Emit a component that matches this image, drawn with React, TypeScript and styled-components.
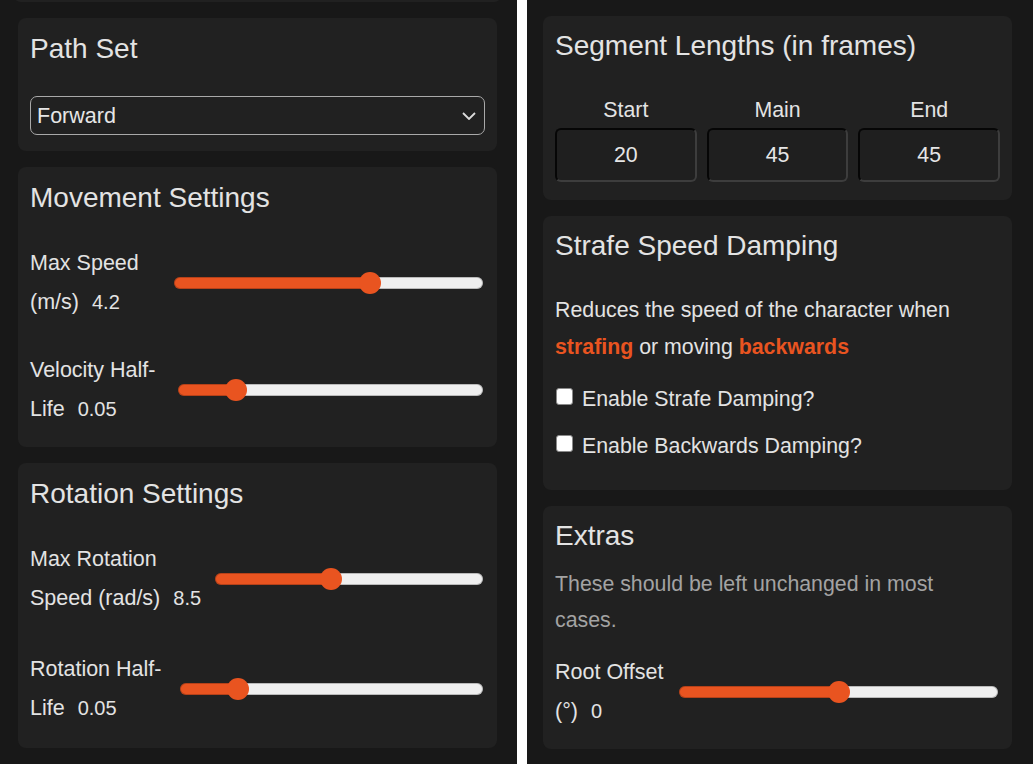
import React, { useState } from "react";
import styled, { createGlobalStyle } from "styled-components";

const ORANGE = "#e95420";

const GlobalStyle = createGlobalStyle`
  html, body {
    margin: 0;
    padding: 0;
    background: #ffffff;
  }
  body {
    font-family: "Liberation Sans", Arial, sans-serif;
    color: #e3e3e3;
    overflow: hidden;
  }
`;

const Page = styled.div`
  display: grid;
  grid-template-columns: 517px 1fr;
  column-gap: 10px;
  height: 764px;
  background: #ffffff;
`;

const Column = styled.div<{ $left: number; $right: number }>`
  background: #181818;
  display: flex;
  flex-direction: column;
  gap: 16px;
  padding: 0 ${(p) => p.$right}px 0 ${(p) => p.$left}px;
  overflow: hidden;
`;

// bottom edge of the panel scrolled out above the viewport
const Tail = styled.div<{ $bleed: number; $show: number }>`
  height: 20px;
  margin: ${(p) => p.$show - 20}px -${(p) => p.$bleed}px 0;
  background: #212121;
  border-radius: 8px;
  flex: none;
`;

const Panel = styled.section<{ $padTop: number; $padBottom: number }>`
  background: #212121;
  border-radius: 8px;
  padding: ${(p) => p.$padTop}px 12px ${(p) => p.$padBottom}px;
  flex: none;
`;

const Title = styled.h2`
  margin: 0;
  font-size: 28px;
  line-height: 36px;
  font-weight: 400;
  color: #e3e3e3;
`;

const SelectWrap = styled.div`
  position: relative;
  margin-top: 29px;
`;

const Select = styled.select`
  appearance: none;
  -webkit-appearance: none;
  display: block;
  width: 100%;
  height: 39px;
  box-sizing: border-box;
  padding: 0 30px 0 6px;
  background: transparent;
  color: #e6e6e6;
  border: 1px solid #a9a9a9;
  border-radius: 7px;
  font-family: inherit;
  font-size: 21.5px;
  outline: none;
`;

const Chevron = styled.svg`
  position: absolute;
  right: 9px;
  top: 50%;
  transform: translateY(-50%);
  pointer-events: none;
`;

const SliderList = styled.div<{ $top: number; $gap: number }>`
  display: flex;
  flex-direction: column;
  gap: ${(p) => p.$gap}px;
  margin-top: ${(p) => p.$top}px;
`;

const SliderRow = styled.div`
  display: flex;
  align-items: center;
`;

const SliderLabel = styled.label<{ $width: number }>`
  flex: none;
  width: ${(p) => p.$width}px;
  font-size: 21.5px;
  line-height: 39px;
  color: #e3e3e3;
`;

const SliderValue = styled.span`
  margin-left: 13px;
  font-size: 20px;
`;

const Range = styled.input.attrs({ type: "range" })<{ $pct: number }>`
  -webkit-appearance: none;
  appearance: none;
  flex: 1;
  min-width: 0;
  height: 12px;
  margin: 0 2px;
  border-radius: 6px;
  outline: none;
  box-shadow: inset 0 0 0 1px rgba(0, 0, 0, 0.22);
  background: linear-gradient(
    to right,
    ${ORANGE} 0,
    ${ORANGE} calc(11px + (100% - 22px) * ${(p) => p.$pct}),
    #efefef calc(11px + (100% - 22px) * ${(p) => p.$pct}),
    #efefef 100%
  );
  &::-webkit-slider-thumb {
    -webkit-appearance: none;
    appearance: none;
    width: 22px;
    height: 22px;
    border-radius: 50%;
    border: none;
    background: ${ORANGE};
  }
`;

const SegmentGrid = styled.div`
  display: grid;
  grid-template-columns: repeat(3, 1fr);
  column-gap: 10px;
  margin-top: 34px;
`;

const SegmentCell = styled.div`
  display: flex;
  flex-direction: column;
  align-items: center;
  gap: 6px;
`;

const SegmentLabel = styled.span`
  font-size: 21.33px;
  line-height: 24px;
`;

const SegmentInput = styled.input`
  width: 100%;
  height: 54px;
  box-sizing: border-box;
  border: 2px solid;
  border-color: #060606 #3d3d3d #3d3d3d #060606;
  border-radius: 6px;
  background: #1f1f1f;
  color: #e6e6e6;
  font-family: inherit;
  font-size: 21.33px;
  text-align: center;
  outline: none;
`;

const Description = styled.p<{ $top: number; $muted?: boolean; $lh: number }>`
  margin: ${(p) => p.$top}px 0 0;
  font-size: 21.33px;
  line-height: ${(p) => p.$lh}px;
  color: ${(p) => (p.$muted ? "#a3a3a3" : "#e3e3e3")};
`;

const Accent = styled.strong`
  color: ${ORANGE};
  font-weight: 700;
`;

const CheckList = styled.div`
  display: flex;
  flex-direction: column;
  gap: 10px;
  margin-top: 15px;
`;

const CheckRow = styled.label`
  display: flex;
  align-items: center;
  font-size: 21.33px;
  line-height: 37px;
  color: #e3e3e3;
`;

const Checkbox = styled.input.attrs({ type: "checkbox" })`
  appearance: none;
  -webkit-appearance: none;
  width: 17px;
  height: 17px;
  margin: 0 9px 6px 1px;
  box-sizing: border-box;
  border: 1px solid #8a8a8a;
  border-radius: 3px;
  background: #ffffff;
  flex: none;
`;

type SliderSpec = {
  label: string;
  min: number;
  max: number;
  step: number;
  value: number;
  labelWidth: number;
};

const Slider: React.FC<SliderSpec> = ({ label, min, max, step, value, labelWidth }) => {
  const [v, setV] = useState(value);
  const pct = (v - min) / (max - min);
  return (
    <SliderRow>
      <SliderLabel $width={labelWidth}>
        {label}
        <SliderValue>{v}</SliderValue>
      </SliderLabel>
      <Range
        $pct={pct}
        min={min}
        max={max}
        step={step}
        value={v}
        onChange={(e) => setV(Number(e.target.value))}
      />
    </SliderRow>
  );
};

export default function App() {
  return (
    <>
      <GlobalStyle />
      <Page>
        <Column $left={18} $right={20}>
          <Tail $bleed={5} $show={2} />

          <Panel $padTop={13} $padBottom={16}>
            <Title>Path Set</Title>
            <SelectWrap>
              <Select defaultValue="forward">
                <option value="forward">Forward</option>
                <option value="strafe">Strafe</option>
                <option value="backward">Backward</option>
              </Select>
              <Chevron width="14" height="8" viewBox="0 0 14 8">
                <polyline points="1,1 7,7 13,1" fill="none" stroke="#dcdcdc" strokeWidth="1.8" />
              </Chevron>
            </SelectWrap>
          </Panel>

          <Panel $padTop={13} $padBottom={18}>
            <Title>Movement Settings</Title>
            <SliderList $top={28} $gap={29}>
              <Slider label="Max Speed (m/s)" min={0} max={6.5} step={0.1} value={4.2} labelWidth={142} />
              <Slider label="Velocity Half-Life" min={0} max={0.3} step={0.01} value={0.05} labelWidth={146} />
            </SliderList>
          </Panel>

          <Panel $padTop={13} $padBottom={20}>
            <Title>Rotation Settings</Title>
            <SliderList $top={28} $gap={32}>
              <Slider label="Max Rotation Speed (rad/s)" min={0} max={20} step={0.1} value={8.5} labelWidth={183} />
              <Slider label="Rotation Half-Life" min={0} max={0.3} step={0.01} value={0.05} labelWidth={148} />
            </SliderList>
          </Panel>
        </Column>

        <Column $left={16} $right={21}>
          <Tail $bleed={0} $show={0} />

          <Panel $padTop={12} $padBottom={18}>
            <Title>Segment Lengths (in frames)</Title>
            <SegmentGrid>
              <SegmentCell>
                <SegmentLabel>Start</SegmentLabel>
                <SegmentInput defaultValue="20" />
              </SegmentCell>
              <SegmentCell>
                <SegmentLabel>Main</SegmentLabel>
                <SegmentInput defaultValue="45" />
              </SegmentCell>
              <SegmentCell>
                <SegmentLabel>End</SegmentLabel>
                <SegmentInput defaultValue="45" />
              </SegmentCell>
            </SegmentGrid>
          </Panel>

          <Panel $padTop={12} $padBottom={25}>
            <Title>Strafe Speed Damping</Title>
            <Description $top={28} $lh={37}>
              Reduces the speed of the character when <Accent>strafing</Accent> or moving{" "}
              <Accent>backwards</Accent>
            </Description>
            <CheckList>
              <CheckRow>
                <Checkbox />
                Enable Strafe Damping?
              </CheckRow>
              <CheckRow>
                <Checkbox />
                Enable Backwards Damping?
              </CheckRow>
            </CheckList>
          </Panel>

          <Panel $padTop={12} $padBottom={18}>
            <Title>Extras</Title>
            <Description $top={12} $lh={36} $muted>
              These should be left unchanged in most cases.
            </Description>
            <SliderList $top={15} $gap={0}>
              <Slider label="Root Offset (°)" min={-180} max={180} step={1} value={0} labelWidth={122} />
            </SliderList>
          </Panel>
        </Column>
      </Page>
    </>
  );
}
